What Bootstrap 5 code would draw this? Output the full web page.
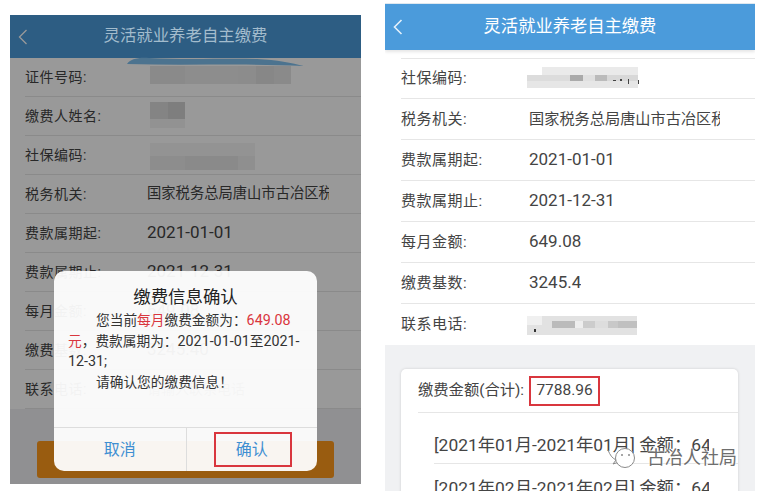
<!DOCTYPE html>
<html lang="zh-CN">

<head>
    <meta charset="UTF-8">
    <meta name="viewport" content="width=device-width, initial-scale=1.0">
    <title>灵活就业养老自主缴费</title>
    <link href="https://cdn.jsdelivr.net/npm/bootstrap@5.3.0/dist/css/bootstrap.min.css" rel="stylesheet">
    <style>
        body {
            font-family: Roboto, "Noto Sans CJK SC", sans-serif;
            background-color: #fff;
            margin: 0;
            height: 491px;
            overflow: hidden;
            color: #444;
        }

        .screen-pair {
            position: relative;
            height: 491px;
            padding-left: 10px;
            gap: 24px;
        }

        .phone {
            position: relative;
            overflow: hidden;
            background-color: #f0f1f3;
        }

        .phone-left {
            width: 351px;
            height: 469px;
            margin-top: 15px;
        }

        .phone-right {
            width: 370px;
            height: 488px;
            margin-top: 3px;
        }

        .app-bar {
            height: 43px;
            background-color: #4b9bdb;
            color: #fff;
            font-size: 16.4px;
        }

        .phone-right .app-bar {
            height: 47px;
            font-size: 17.3px;
            border-top: 1px solid #dfe8ef;
            box-shadow: 0 2px 3px rgba(0, 0, 0, .1);
        }

        .bar-title-dim {
            position: relative;
            z-index: 2;
            color: #a3bccd;
        }

        .back-arrow {
            position: absolute;
            left: 8px;
            top: 50%;
            transform: translateY(-50%);
        }

        .form-rows {
            background-color: #fff;
        }

        .phone-right .form-rows {
            padding-top: 8px;
            height: 295px;
        }

        .form-line {
            height: 39px;
            margin-left: 15px;
            border-bottom: 1px solid #e6e6e6;
            font-size: 14px;
        }

        .phone-right .form-line {
            height: 41px;
            margin-left: 16px;
            font-size: 15px;
        }

        .phone-right .form-line:first-child {
            border-top: 1px solid #e6e6e6;
        }

        .phone-right .form-line:last-child {
            border-bottom: 0;
        }

        .line-label {
            width: 122px;
            flex-shrink: 0;
            letter-spacing: .5px;
        }

        .phone-right .line-label {
            width: 128px;
        }

        .line-value {
            white-space: nowrap;
            overflow: hidden;
        }

        .left-clip {
            width: 182px;
            font-size: 14.3px;
        }

        .right-clip {
            width: 191px;
            font-size: 15.2px;
        }

        .line-num {
            font-size: 17px;
        }

        .mosaic {
            display: block;
            filter: blur(.6px);
        }

        .mosaic-shift {
            margin-left: -4px;
        }

        .smear {
            position: absolute;
            left: 117px;
            top: 42px;
        }

        .pay-btn {
            height: 37px;
            margin: 32px 27px 0;
            background-color: #ff9a1c;
            border-radius: 3px;
        }

        .mask-layer {
            position: absolute;
            inset: 0;
            background-color: rgba(0, 0, 0, .4);
        }

        .confirm-box {
            position: absolute;
            left: 44px;
            top: 256px;
            width: 263px;
            height: 200px;
            background-color: rgba(255, 255, 255, .94);
            border-radius: 10px;
            color: #333;
            z-index: 3;
        }

        .confirm-title {
            font-size: 17.4px;
            line-height: 24px;
            color: #222;
            padding-top: 14px;
        }

        .confirm-text {
            font-size: 13.7px;
            line-height: 20.6px;
            padding: 1px 14px 0;
        }

        .confirm-text p {
            margin: 0;
        }

        .confirm-num {
            font-size: 14.3px;
        }

        .text-indent {
            text-indent: 28px;
        }

        .red-text {
            color: #d9363e;
        }

        .confirm-actions {
            height: 44px;
            border-top: 1px solid #ddd;
            color: #3f8fd2;
            font-size: 16px;
        }

        .confirm-action {
            position: relative;
            width: 50%;
        }

        .confirm-action+.confirm-action {
            border-left: 1px solid #ddd;
        }

        .red-frame {
            position: absolute;
            left: 27px;
            top: 4px;
            width: 78px;
            height: 35px;
            border: 2px solid #d9363e;
        }

        .total-panel {
            margin: 24px 17px 0 16px;
            padding: 0 0 0 17px;
            background-color: #fff;
            border-radius: 5px;
            box-shadow: 0 0 3px rgba(0, 0, 0, .15);
            height: 130px;
            overflow: hidden;
        }

        .total-head {
            height: 44px;
            margin-bottom: 8px;
            border-bottom: 1px solid #e6e6e6;
            font-size: 15.3px;
        }

        .total-value {
            margin-left: 5px;
            width: 71px;
            height: 30px;
            border: 2px solid #d9363e;
            font-size: 15.5px;
        }

        .month-line {
            height: 43px;
            margin-left: 16px;
            padding-top: 12px;
            border-bottom: 1px solid #e6e6e6;
            font-size: 17.4px;
            line-height: 24px;
        }

        .month-text {
            width: 275px;
            overflow: hidden;
            white-space: nowrap;
        }

        .watermark {
            position: absolute;
            left: 607px;
            top: 447px;
            gap: 9px;
            color: #6e6e6e;
            font-size: 18px;
            line-height: 22px;
            text-shadow: 0 0 2px #fff, 0 0 2px #fff;
        }
    </style>
</head>

<body>
    <div class="screen-pair d-flex align-items-start">
        <!-- 左边: 确认弹窗 -->
        <div class="phone phone-left">
            <div class="app-bar d-flex align-items-center justify-content-center position-relative">
                <svg class="back-arrow" width="10" height="16" viewBox="0 0 10 16">
                    <polyline points="8.5,1 1.5,8 8.5,15" fill="none" stroke="#fff" stroke-width="1.3" />
                </svg>
                <span class="bar-title-dim">灵活就业养老自主缴费</span>
            </div>
            <div class="form-rows">
                <div class="form-line d-flex align-items-center">
                    <div class="line-label">证件号码:</div>
                    <svg class="mosaic" width="150" height="30" viewBox="0 0 150 30">
                        <rect x="3" y="4" width="35" height="18" fill="#e6e6e6" />
                        <rect x="38" y="4" width="35" height="18" fill="#ececec" />
                        <rect x="73" y="4" width="18" height="18" fill="#ececec" />
                        <rect x="91" y="4" width="18" height="18" fill="#e9e9e9" />
                        <rect x="109" y="4" width="18" height="18" fill="#e2e2e2" />
                        <rect x="127" y="4" width="17" height="18" fill="#e6e6e6" />
                    </svg>
                </div>
                <div class="form-line d-flex align-items-center">
                    <div class="line-label">缴费人姓名:</div>
                    <svg class="mosaic" width="90" height="30" viewBox="0 0 90 30">
                        <rect x="3" y="1" width="18" height="17" fill="#dcdcdc" />
                        <rect x="21" y="1" width="17" height="17" fill="#d2d2d2" />
                        <rect x="3" y="18" width="35" height="9" fill="#f4f4f4" />
                    </svg>
                </div>
                <div class="form-line d-flex align-items-center">
                    <div class="line-label">社保编码:</div>
                    <svg class="mosaic" width="115" height="30" viewBox="0 0 115 30">
                        <rect x="3" y="3" width="105" height="13" fill="#f6f6f6" />
                        <rect x="3" y="16" width="35" height="14" fill="#ececec" />
                        <rect x="38" y="16" width="53" height="14" fill="#e6e6e6" />
                        <rect x="91" y="16" width="17" height="14" fill="#efefef" />
                    </svg>
                </div>
                <div class="form-line d-flex align-items-center">
                    <div class="line-label">税务机关:</div>
                    <div class="line-value left-clip">国家税务总局唐山市古冶区税务局</div>
                </div>
                <div class="form-line d-flex align-items-center">
                    <div class="line-label">费款属期起:</div>
                    <div class="line-value line-num">2021-01-01</div>
                </div>
                <div class="form-line d-flex align-items-center">
                    <div class="line-label">费款属期止:</div>
                    <div class="line-value line-num">2021-12-31</div>
                </div>
                <div class="form-line d-flex align-items-center">
                    <div class="line-label">每月金额:</div>
                    <div class="line-value line-num">649.08</div>
                </div>
                <div class="form-line d-flex align-items-center">
                    <div class="line-label">缴费基数:</div>
                    <div class="line-value line-num">3245.40</div>
                </div>
                <div class="form-line d-flex align-items-center">
                    <div class="line-label">联系电话:</div>
                    <div class="line-value text-black-50">请输入联系电话</div>
                </div>
            </div>
            <div class="pay-btn"></div>
            <svg class="smear" width="178" height="12" viewBox="0 0 178 12">
                <path d="M0 7 C3 2 12 0 22 1 C60 3 100 1 130 2 C150 3 165 6 177 9 C120 6 60 9 0 7 Z" fill="#7fc0ee" />
            </svg>
            <div class="mask-layer"></div>
            <div class="confirm-box d-flex flex-column">
                <div class="confirm-title text-center">缴费信息确认</div>
                <div class="confirm-text flex-grow-1">
                    <p class="text-indent">您当前<span class="red-text">每月</span>缴费金额为：<span class="red-text confirm-num">649.08</span> <span class="red-text">元</span>，费款属期为：<span class="confirm-num">2021-01-01</span>至<span class="confirm-num">2021-<wbr>12-31;</span></p>
                    <p class="text-indent">请确认您的缴费信息！</p>
                </div>
                <div class="confirm-actions d-flex">
                    <div class="confirm-action d-flex align-items-center justify-content-center">取消</div>
                    <div class="confirm-action d-flex align-items-center justify-content-center">
                        确认
                        <span class="red-frame"></span>
                    </div>
                </div>
            </div>
        </div>

        <!-- 右边: 缴费明细 -->
        <div class="phone phone-right">
            <div class="app-bar d-flex align-items-center justify-content-center position-relative">
                <svg class="back-arrow" width="10" height="16" viewBox="0 0 10 16">
                    <polyline points="8.5,1 1.5,8 8.5,15" fill="none" stroke="#e4f1fb" stroke-width="1.6" />
                </svg>
                灵活就业养老自主缴费
            </div>
            <div class="form-rows">
                <div class="form-line d-flex align-items-center">
                    <div class="line-label">社保编码:</div>
                    <svg class="mosaic mosaic-shift" width="120" height="24" viewBox="0 0 120 24">
                        <rect x="17" y="0" width="96" height="8" fill="#eaeaea" />
                        <rect x="2" y="8" width="43" height="6" fill="#dcdcdc" />
                        <rect x="45" y="8" width="13" height="6" fill="#aaa" />
                        <rect x="58" y="8" width="12" height="6" fill="#e0e0e0" />
                        <rect x="70" y="8" width="12" height="6" fill="#bbb" />
                        <rect x="82" y="8" width="31" height="6" fill="#d8d8d8" />
                        <rect x="2" y="14" width="111" height="7" fill="#e6e6e6" />
                        <rect x="88" y="13" width="3" height="1" fill="#444" />
                        <rect x="95" y="12" width="2" height="2" fill="#444" />
                        <rect x="103" y="12" width="1" height="5" fill="#444" />
                        <rect x="113" y="13" width="1" height="4" fill="#444" />
                    </svg>
                </div>
                <div class="form-line d-flex align-items-center">
                    <div class="line-label">税务机关:</div>
                    <div class="line-value right-clip">国家税务总局唐山市古冶区税务局</div>
                </div>
                <div class="form-line d-flex align-items-center">
                    <div class="line-label">费款属期起:</div>
                    <div class="line-value line-num">2021-01-01</div>
                </div>
                <div class="form-line d-flex align-items-center">
                    <div class="line-label">费款属期止:</div>
                    <div class="line-value line-num">2021-12-31</div>
                </div>
                <div class="form-line d-flex align-items-center">
                    <div class="line-label">每月金额:</div>
                    <div class="line-value line-num">649.08</div>
                </div>
                <div class="form-line d-flex align-items-center">
                    <div class="line-label">缴费基数:</div>
                    <div class="line-value line-num">3245.4</div>
                </div>
                <div class="form-line d-flex align-items-center">
                    <div class="line-label">联系电话:</div>
                    <svg class="mosaic mosaic-shift" width="120" height="24" viewBox="0 0 120 24">
                        <rect x="2" y="3" width="110" height="19" fill="#e2e2e2" />
                        <rect x="2" y="3" width="15" height="9" fill="#f0f0f0" />
                        <rect x="27" y="8" width="23" height="7" fill="#bbb" />
                        <rect x="50" y="8" width="8" height="7" fill="#eee" />
                        <rect x="58" y="8" width="12" height="7" fill="#ccc" />
                        <rect x="70" y="8" width="13" height="7" fill="#ddd" />
                        <rect x="83" y="8" width="10" height="7" fill="#c8c8c8" />
                        <rect x="93" y="8" width="19" height="7" fill="#c0c0c0" />
                        <rect x="9" y="16" width="2" height="3" fill="#333" />
                    </svg>
                </div>
            </div>
            <div class="total-panel">
                <div class="total-head d-flex align-items-center">
                    缴费金额(合计):
                    <div class="total-value d-flex align-items-center justify-content-center">7788.96</div>
                </div>
                <div class="month-line">
                    <div class="month-text">[2021年01月-2021年01月] 金额：649.08</div>
                </div>
                <div class="month-line">
                    <div class="month-text">[2021年02月-2021年02月] 金额：649.08</div>
                </div>
            </div>
        </div>

        <div class="watermark d-flex align-items-center">
            <svg width="31" height="22" viewBox="0 0 31 22">
                <path d="M1 3 C3 8 5 11 9 13 L6 17 L12 15" fill="none" stroke="#8a8a8a" stroke-width="1" />
                <circle cx="18" cy="11" r="9.5" fill="#fff" stroke="#8a8a8a" stroke-width="1" />
                <circle cx="15" cy="8" r="1" fill="#8a8a8a" />
                <circle cx="22" cy="8" r="1" fill="#8a8a8a" />
            </svg>
            <span>古冶人社局</span>
        </div>
    </div>

    <script src="https://cdn.jsdelivr.net/npm/bootstrap@5.3.0/dist/js/bootstrap.bundle.min.js"></script>
</body>

</html>
